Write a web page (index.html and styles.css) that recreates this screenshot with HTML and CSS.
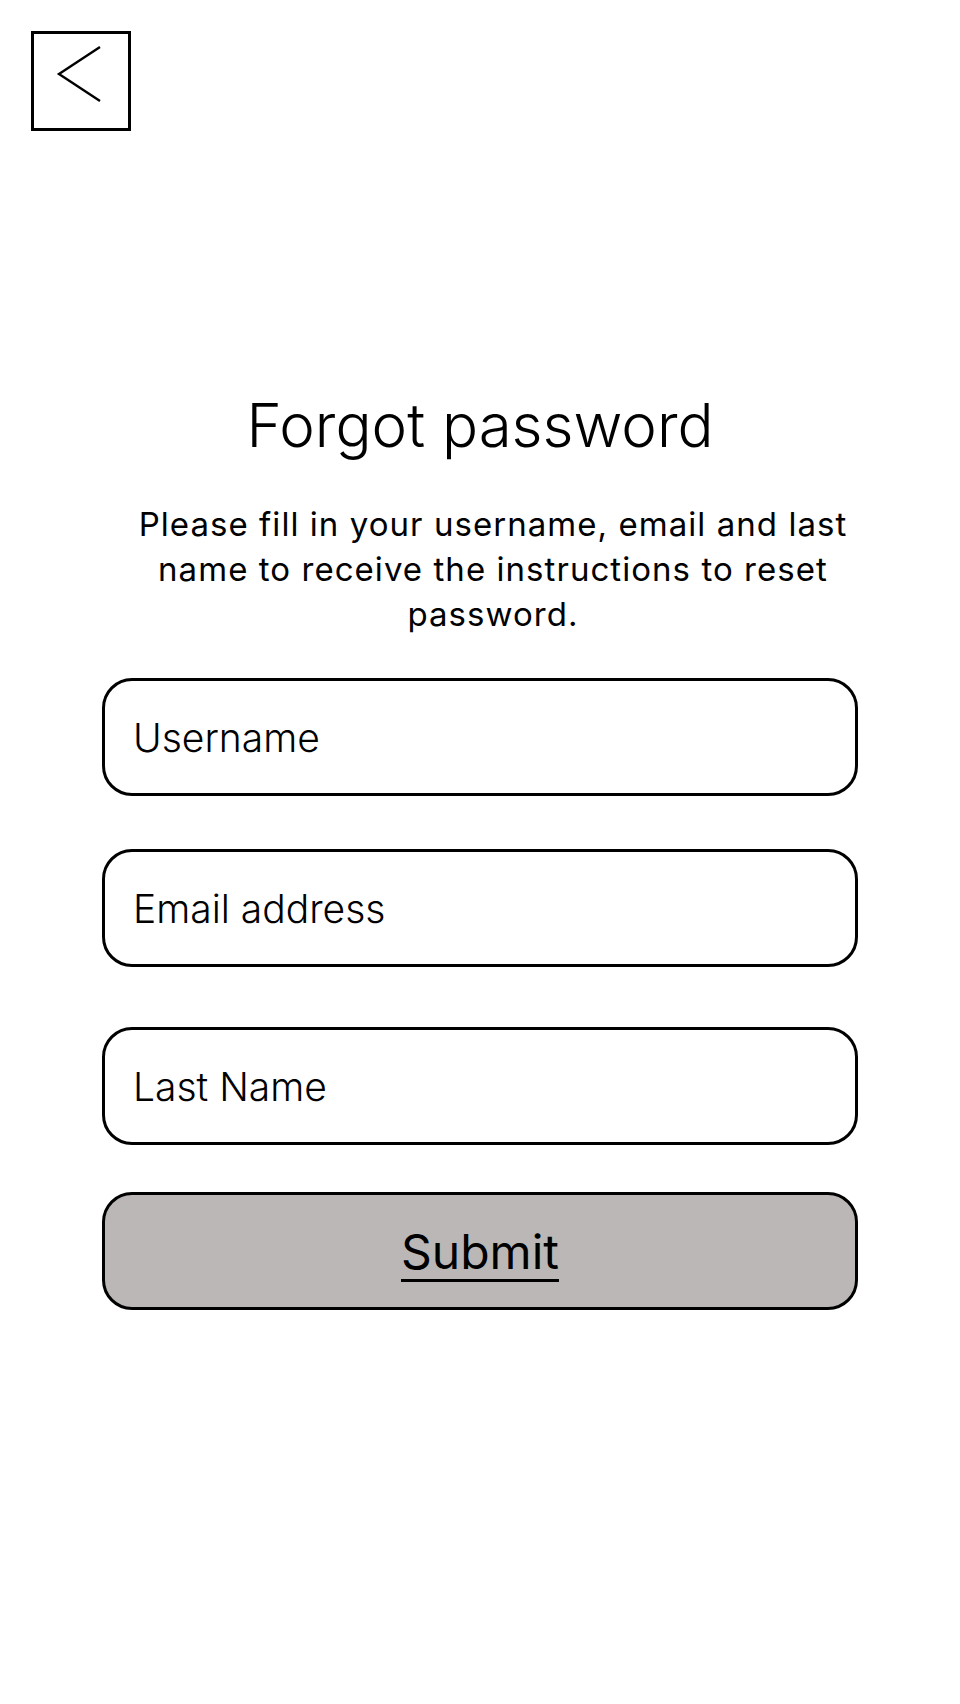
FILE: index.html
```html
<!DOCTYPE html>
<html lang="en">
<head>
<meta charset="utf-8">
<title>Forgot password</title>
<link rel="stylesheet" href="styles.css">
</head>
<body>
<div class="page">
  <header class="topbar">
    <button class="back" type="button" aria-label="Back">
      <svg width="94" height="94" viewBox="0 0 94 94"><polyline points="66,13 25,40 66,67" fill="none" stroke="#000" stroke-width="2.4" stroke-linejoin="miter"/></svg>
    </button>
  </header>
  <main class="content">
    <h1 class="title">Forgot password</h1>
    <p class="intro">Please fill in your username, email and last name to receive the instructions to reset password.</p>
    <form class="form">
      <input class="field" type="text" placeholder="Username">
      <input class="field field-email" type="email" placeholder="Email address">
      <input class="field field-last" type="text" placeholder="Last Name">
      <button class="submit" type="button"><span class="submit-label">Submit</span></button>
    </form>
  </main>
</div>
</body>
</html>
```

FILE: styles.css
```css
* { box-sizing: border-box; }
html, body { margin: 0; padding: 0; background: #fff; }
body {
  font-family: Inter, "Noto Sans", "Liberation Sans", sans-serif;
  color: #000;
}
.page { width: 960px; min-height: 1704px; }
.topbar { padding: 31px 0 0 31px; }
.back {
  width: 100px;
  height: 100px;
  border: 3px solid #000;
  background: #fff;
  padding: 0;
  margin: 0;
  display: block;
  cursor: pointer;
}
.back svg { display: block; }
.content {
  display: flex;
  flex-direction: column;
  align-items: center;
  padding-top: 257px;
}
.title {
  margin: 0;
  font-size: 60px;
  line-height: 74px;
  font-weight: 300;
  text-align: center;
}
.intro {
  margin: 40px 0 0 26px;
  width: 760px;
  font-size: 33px;
  line-height: 45px;
  font-weight: 400;
  letter-spacing: 1.05px;
  text-align: center;
}
.form {
  width: 756px;
  margin-top: 41px;
  display: flex;
  flex-direction: column;
}
.field {
  height: 118px;
  border: 3px solid #000;
  border-radius: 30px;
  padding: 0 28px;
  font-family: inherit;
  font-size: 39px;
  font-weight: 300;
  color: #000;
  background: #fff;
  outline: none;
}
.field::placeholder { color: #000; opacity: 1; }
.field-email { margin-top: 53px; }
.field-last { margin-top: 60px; }
.submit {
  margin-top: 47px;
  height: 118px;
  border: 3px solid #000;
  border-radius: 30px;
  background: #bbb7b6;
  font-family: inherit;
  font-size: 48px;
  font-weight: 400;
  color: #000;
  cursor: pointer;
}
.submit-label {
  text-decoration: underline;
  text-decoration-thickness: 3px;
  text-underline-offset: 10px;
}
```
